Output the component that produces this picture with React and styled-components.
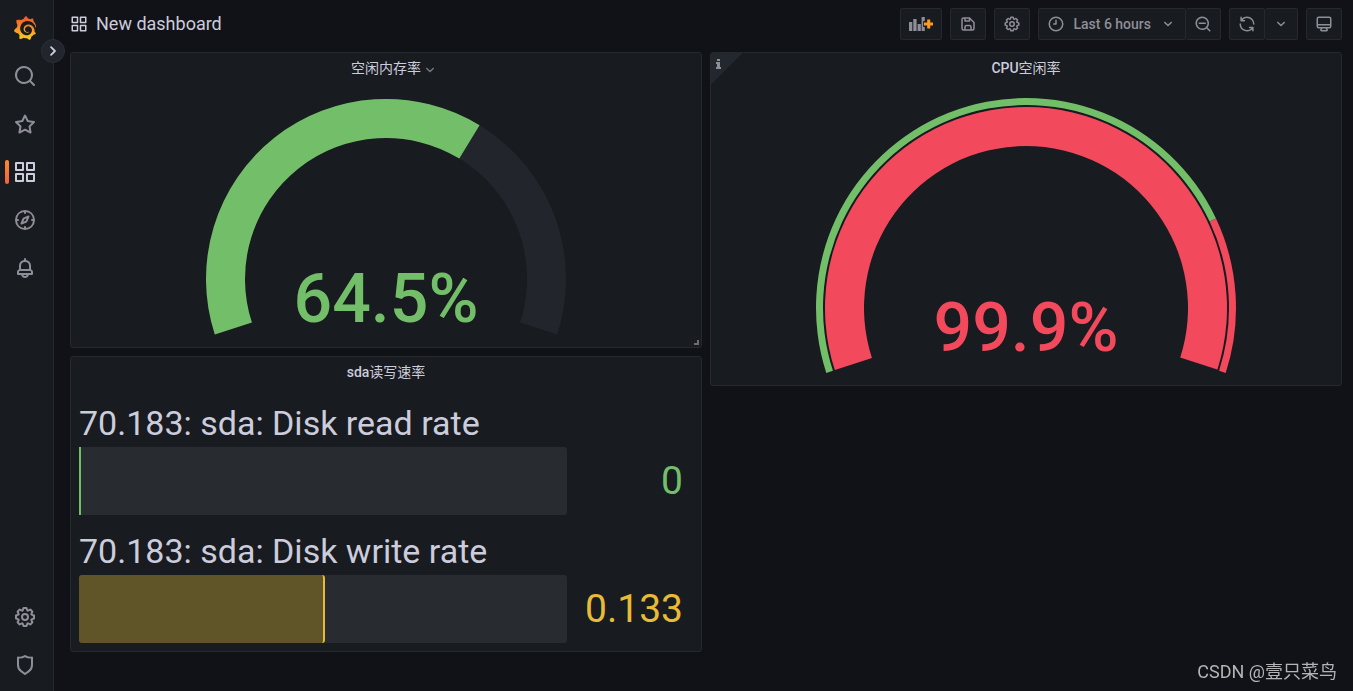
import React from 'react';
import styled, { createGlobalStyle } from 'styled-components';
import { SiGrafana } from 'react-icons/si';

const GlobalStyle = createGlobalStyle`
  * {
    box-sizing: border-box;
  }
  body {
    margin: 0;
    background: #111217;
    color: #ccccdc;
    font-family: Roboto, "Noto Sans CJK SC", sans-serif;
    font-size: 14px;
    line-height: 22px;
  }
  button {
    font: inherit;
    color: inherit;
    cursor: pointer;
  }
`;

const icons = {
  search: 'M21.71,20.29,18,16.61A9,9,0,1,0,16.61,18l3.68,3.68a1,1,0,0,0,1.42,0A1,1,0,0,0,21.71,20.29ZM11,18a7,7,0,1,1,7-7A7,7,0,0,1,11,18Z',
  searchMinus: 'M21.71,20.29,18,16.61A9,9,0,1,0,16.61,18l3.68,3.68a1,1,0,0,0,1.42,0A1,1,0,0,0,21.71,20.29ZM11,18a7,7,0,1,1,7-7A7,7,0,0,1,11,18Zm4-8H7a1,1,0,0,0,0,2h8a1,1,0,0,0,0-2Z',
  star: 'M22,9.67A1,1,0,0,0,21.14,9l-5.69-.83L12.9,3a1,1,0,0,0-1.8,0L8.55,8.16,2.86,9a1,1,0,0,0-.81.68,1,1,0,0,0,.25,1l4.13,4-1,5.68A1,1,0,0,0,6.9,21.44L12,18.77l5.1,2.67a.93.93,0,0,0,.46.12,1,1,0,0,0,.59-.19,1,1,0,0,0,.4-1l-1-5.68,4.13-4A1,1,0,0,0,22,9.67Zm-6.15,4a1,1,0,0,0-.29.88l.72,4.2-3.76-2a1.06,1.06,0,0,0-.94,0l-3.76,2,.72-4.2a1,1,0,0,0-.29-.88l-3-3,4.21-.61a1,1,0,0,0,.76-.55L12,5.7l1.88,3.82a1,1,0,0,0,.76.55l4.21.61Z',
  apps: 'M10,13H3a1,1,0,0,0-1,1v7a1,1,0,0,0,1,1h7a1,1,0,0,0,1-1V14A1,1,0,0,0,10,13ZM9,20H4V15H9ZM21,2H14a1,1,0,0,0-1,1v7a1,1,0,0,0,1,1h7a1,1,0,0,0,1-1V3A1,1,0,0,0,21,2ZM20,9H15V4h5Zm1,4H14a1,1,0,0,0-1,1v7a1,1,0,0,0,1,1h7a1,1,0,0,0,1-1V14A1,1,0,0,0,21,13Zm-1,7H15V15h5ZM10,2H3A1,1,0,0,0,2,3v7a1,1,0,0,0,1,1h7a1,1,0,0,0,1-1V3A1,1,0,0,0,10,2ZM9,9H4V4H9Z',
  compass: 'M12,2A10,10,0,1,0,22,12,10,10,0,0,0,12,2Zm1,17.93V19a1,1,0,0,0-2,0v.93A8,8,0,0,1,4.07,13H5a1,1,0,0,0,0-2H4.07A8,8,0,0,1,11,4.07V5a1,1,0,0,0,2,0V4.07A8,8,0,0,1,19.93,11H19a1,1,0,0,0,0,2h.93A8,8,0,0,1,13,19.93ZM15.14,7.55l-5,2.12a1,1,0,0,0-.52.52l-2.12,5a1,1,0,0,0,.21,1.1,1,1,0,0,0,.7.29.93.93,0,0,0,.4-.08l5-2.12a1,1,0,0,0,.52-.52l2.12-5a1,1,0,0,0-1.31-1.31Zm-2.49,5.1-2.28,1,1-2.28,2.28-1Z',
  bell: 'M18,13.18V10a6,6,0,0,0-5-5.91V3a1,1,0,0,0-2,0V4.09A6,6,0,0,0,6,10v3.18A3,3,0,0,0,4,16v2a1,1,0,0,0,1,1H8.14a4,4,0,0,0,7.72,0H19a1,1,0,0,0,1-1V16A3,3,0,0,0,18,13.18ZM8,10a4,4,0,0,1,8,0v3H8Zm4,10a2,2,0,0,1-1.72-1h3.44A2,2,0,0,1,12,20Zm6-3H6V16a1,1,0,0,1,1-1H17a1,1,0,0,1,1,1Z',
  cog: 'M21.32,9.55l-1.89-.63.89-1.78A1,1,0,0,0,20.13,6L18,3.87a1,1,0,0,0-1.15-.19l-1.78.89-.63-1.89A1,1,0,0,0,13.5,2h-3a1,1,0,0,0-.95.68L8.92,4.57,7.14,3.68A1,1,0,0,0,6,3.87L3.87,6a1,1,0,0,0-.19,1.15l.89,1.78-1.89.63A1,1,0,0,0,2,10.5v3a1,1,0,0,0,.68.95l1.89.63-.89,1.78A1,1,0,0,0,3.87,18L6,20.13a1,1,0,0,0,1.15.19l1.78-.89.63,1.89a1,1,0,0,0,.95.68h3a1,1,0,0,0,.95-.68l.63-1.89,1.78.89A1,1,0,0,0,18,20.13L20.13,18a1,1,0,0,0,.19-1.15l-.89-1.78,1.89-.63A1,1,0,0,0,22,13.5v-3A1,1,0,0,0,21.32,9.55ZM20,12.78l-1.2.4A2,2,0,0,0,17.64,16l.57,1.14-1.1,1.1L16,17.64a2,2,0,0,0-2.79,1.16l-.4,1.2H11.22l-.4-1.2A2,2,0,0,0,8,17.64l-1.14.57-1.1-1.1L6.36,16A2,2,0,0,0,5.2,13.18L4,12.78V11.22l1.2-.4A2,2,0,0,0,6.36,8L5.79,6.89l1.1-1.1L8,6.36A2,2,0,0,0,10.82,5.2l.4-1.2h1.56l.4,1.2A2,2,0,0,0,16,6.36l1.14-.57,1.1,1.1L17.64,8a2,2,0,0,0,1.16,2.79l1.2.4ZM12,8a4,4,0,1,0,4,4A4,4,0,0,0,12,8Zm0,6a2,2,0,1,1,2-2A2,2,0,0,1,12,14Z',
  shield: 'M19.63,3.65a1,1,0,0,0-.84-.2,8,8,0,0,1-6.22-1.27,1,1,0,0,0-1.14,0A8,8,0,0,1,5.21,3.45a1,1,0,0,0-.84.2A1,1,0,0,0,4,4.43v7.45a9,9,0,0,0,3.77,7.33l3.65,2.6a1,1,0,0,0,1.16,0l3.65-2.6A9,9,0,0,0,20,11.88V4.43A1,1,0,0,0,19.63,3.65ZM18,11.88a7,7,0,0,1-2.93,5.7L12,19.77,8.93,17.58A7,7,0,0,1,6,11.88V5.58a10,10,0,0,0,6-1.39,10,10,0,0,0,6,1.39Z',
  save: 'M20.71,9.29l-6-6a1,1,0,0,0-.32-.21A1.09,1.09,0,0,0,14,3H6A3,3,0,0,0,3,6V18a3,3,0,0,0,3,3H18a3,3,0,0,0,3-3V10A1,1,0,0,0,20.71,9.29ZM9,5h4V7H9Zm6,14H9V16a1,1,0,0,1,1-1h4a1,1,0,0,1,1,1Zm4-1a1,1,0,0,1-1,1H17V16a3,3,0,0,0-3-3H10a3,3,0,0,0-3,3v3H6a1,1,0,0,1-1-1V6A1,1,0,0,1,6,5H7V8A1,1,0,0,0,8,9h6a1,1,0,0,0,1-1V6.41l4,4Z',
  clock: 'M12,6a1,1,0,0,0-1,1v4H9a1,1,0,0,0,0,2h3a1,1,0,0,0,1-1V7A1,1,0,0,0,12,6Zm0-4A10,10,0,1,0,22,12,10,10,0,0,0,12,2Zm0,18a8,8,0,1,1,8-8A8,8,0,0,1,12,20Z',
  angleDown: 'M17,9.17a1,1,0,0,0-1.41,0L12,12.71,8.46,9.17a1,1,0,0,0-1.41,0,1,1,0,0,0,0,1.42l4.24,4.24a1,1,0,0,0,1.42,0L17,10.59A1,1,0,0,0,17,9.17Z',
  angleRight: 'M14.83,11.29,10.59,7.05a1,1,0,0,0-1.42,0,1,1,0,0,0,0,1.41L12.71,12,9.17,15.54a1,1,0,0,0,0,1.41,1,1,0,0,0,.71.29,1,1,0,0,0,.71-.29l4.24-4.24A1,1,0,0,0,14.83,11.29Z',
  sync: 'M19.91,15.51H15.38a1,1,0,0,0,0,2h2.4A8,8,0,0,1,4,12a1,1,0,1,0-2,0,10,10,0,0,0,16.88,7.23V21a1,1,0,0,0,2,0V16.5A1,1,0,0,0,19.91,15.51ZM12,2A10,10,0,0,0,5.12,4.77V3a1,1,0,0,0-2,0V7.5a1,1,0,0,0,1,1h4.5a1,1,0,0,0,0-2H6.22A8,8,0,0,1,20,12a1,1,0,0,0,2,0A10,10,0,0,0,12,2Z',
  monitor: 'M19,2H5A3,3,0,0,0,2,5V15a3,3,0,0,0,3,3H7.64l-.58,1a2,2,0,0,0,0,2,2,2,0,0,0,1.75,1h6.46A2,2,0,0,0,17,21a2,2,0,0,0,0-2l-.59-1H19a3,3,0,0,0,3-3V5A3,3,0,0,0,19,2ZM8.77,20,10,18H14l1.2,2ZM20,15a1,1,0,0,1-1,1H5a1,1,0,0,1-1-1V14H20Zm0-3H4V5A1,1,0,0,1,5,4H19a1,1,0,0,1,1,1Z',
};

const Svg = styled.svg`
  display: block;
  flex: none;
  fill: currentColor;
`;

const Icon = ({ name, size = 18 }) => (
  <Svg viewBox="0 0 24 24" width={size} height={size} aria-hidden="true">
    <path d={icons[name]} />
  </Svg>
);

const Page = styled.div`
  display: flex;
  min-height: 100vh;
`;

const Sidebar = styled.nav`
  position: relative;
  display: flex;
  flex-direction: column;
  flex: none;
  width: 54px;
  padding: 4px 3px 2px 0;
  background: #181b1f;
  border-right: 1px solid #25282c;
`;

const NavItem = styled.a`
  position: relative;
  display: flex;
  align-items: center;
  justify-content: center;
  height: 48px;
  color: ${props => (props.$active ? '#ccccdc' : '#8e8e99')};

  &::before {
    content: '';
    display: ${props => (props.$active ? 'block' : 'none')};
    position: absolute;
    left: 5px;
    top: 12px;
    width: 4px;
    height: 24px;
    border-radius: 2px;
    background: linear-gradient(#ff8833, #f55f3e);
  }
`;

const LogoDefs = styled.svg`
  position: absolute;
`;

const Logo = styled(SiGrafana)`
  width: 24px;
  height: 24px;

  path {
    fill: url(#logoFill);
  }
`;

const Spacer = styled.div`
  flex: 1;
`;

const ExpandButton = styled.button`
  position: absolute;
  top: 39px;
  right: -12px;
  display: flex;
  align-items: center;
  justify-content: center;
  width: 24px;
  height: 24px;
  padding: 0;
  border: 1px solid #2c2f35;
  border-radius: 50%;
  background: #22252b;
`;

const Main = styled.main`
  flex: 1;
  min-width: 0;
  padding: 0 11px 16px 16px;
`;

const Header = styled.header`
  display: flex;
  align-items: center;
  gap: 8px;
  padding: 8px 0 12px;
`;

const Title = styled.h1`
  display: flex;
  align-items: center;
  gap: 8px;
  flex: 1;
  margin: 0;
  font-size: 18px;
  font-weight: 400;
`;

const ButtonGroup = styled.div`
  display: flex;

  button + button {
    border-left: 0;
  }
`;

const ToolButton = styled.button`
  display: flex;
  align-items: center;
  gap: 8px;
  height: 32px;
  padding: 0 ${props => props.$pad || 8}px;
  border: 1px solid #25282c;
  border-radius: 2px;
  background: #181b1f;
  color: #8e8e99;
  font-weight: 500;
`;

const Grid = styled.div`
  display: grid;
  grid-template-columns: repeat(2, minmax(0, 1fr));
  grid-auto-rows: 30px;
  gap: 8px;
`;

const PanelBox = styled.section`
  position: relative;
  display: flex;
  flex-direction: column;
  grid-column: ${props => props.$col};
  grid-row: ${props => props.$row};
  background: #181b1f;
  border: 1px solid #25282c;
  border-radius: 3px;
`;

const PanelTitle = styled.h2`
  display: flex;
  justify-content: center;
  margin: 0;
  padding: 4px 0;
  font-size: 14px;
  font-weight: 400;
`;

const TitleButton = styled.button`
  position: relative;
  padding: 0;
  border: 0;
  background: none;
`;

const TitlePrefix = styled.span`
  font-weight: 500;
`;

const TitleCaret = styled.span`
  position: absolute;
  left: 100%;
  top: 4px;
  color: #77787f;
`;

const InfoCorner = styled.button`
  position: absolute;
  top: 0;
  left: 0;
  width: 32px;
  height: 32px;
  padding: 0;
  border: 0;
  background: linear-gradient(135deg, #22282d 50%, transparent 50%);
  color: #8e8e99;
`;

const ResizeHandle = styled.span`
  position: absolute;
  right: 2px;
  bottom: 2px;
  width: 5px;
  height: 5px;
  border-right: 2px solid #6b6d70;
  border-bottom: 2px solid #6b6d70;
`;

const GaugeSvg = styled.svg`
  display: block;
  flex: 1;
  width: 100%;
  min-height: 0;
`;

const GaugeValue = styled.text`
  font-size: 68px;
  font-weight: 500;
  text-anchor: middle;
`;

const BarList = styled.div`
  display: flex;
  flex-direction: column;
  justify-content: flex-end;
  gap: 16px;
  flex: 1;
  padding: 8px;
`;

const BarLabel = styled.div`
  padding-bottom: 4px;
  font-size: 34px;
  line-height: 40px;
  white-space: nowrap;
`;

const BarRow = styled.div`
  display: flex;
  align-items: center;
`;

const Track = styled.div`
  flex: 1;
  height: 68px;
  border-radius: 3px;
  background: #282b30;
`;

const Fill = styled.div`
  height: 100%;
  min-width: 2px;
  border-right: 2px solid ${props => props.$color};
  border-radius: ${props => (props.$empty ? 0 : 3)}px;
  background: ${props => props.$fill};
`;

const BarValue = styled.div`
  width: 126px;
  padding-right: 10px;
  color: ${props => props.$color};
  font-size: 39px;
  line-height: 44px;
  text-align: right;
`;

const Watermark = styled.div`
  position: fixed;
  right: 16px;
  bottom: 8px;
  color: #b4b4b6;
  font-size: 18px;
`;

const Panel = ({ prefix, title, col, row, menu, info, resizable, children }) => (
  <PanelBox $col={col} $row={row}>
    {info && (
      <InfoCorner aria-label="Panel description">
        <Svg viewBox="0 0 32 32" width="32" height="32" aria-hidden="true">
          <path d="M6 6h3v2H6zM5 9h4v5h1v2H5v-2h1v-3H5z" />
        </Svg>
      </InfoCorner>
    )}
    <PanelTitle>
      <TitleButton>
        {prefix && <TitlePrefix>{prefix}</TitlePrefix>}
        {title}
        {menu && (
          <TitleCaret>
            <Icon name="angleDown" />
          </TitleCaret>
        )}
      </TitleButton>
    </PanelTitle>
    {children}
    {resizable && <ResizeHandle />}
  </PanelBox>
);

// The dial sweeps 216 degrees, starting 18 degrees below the horizontal
const arcPath = (cx, cy, outer, inner, from, to) => {
  const point = (r, t) => {
    const a = ((198 - t * 216) * Math.PI) / 180;
    return `${cx + r * Math.cos(a)} ${cy - r * Math.sin(a)}`;
  };
  const large = (to - from) * 216 > 180 ? 1 : 0;
  return `M${point(outer, from)} A${outer} ${outer} 0 ${large} 1 ${point(outer, to)}
    L${point(inner, to)} A${inner} ${inner} 0 ${large} 0 ${point(inner, from)} Z`;
};

const Gauge = ({ value, color, height, cy, radius, thresholds = [] }) => {
  const cx = 315;
  const inner = radius - 39;
  return (
    <GaugeSvg viewBox={`0 0 630 ${height}`}>
      <path d={arcPath(cx, cy, radius, inner, 0, 1)} fill="#22252b" />
      <path d={arcPath(cx, cy, radius, inner, 0, value / 100)} fill={color} />
      {thresholds.map(t => (
        <path key={t.from} d={arcPath(cx, cy, radius + 9, radius + 2, t.from, t.to)} fill={t.color} />
      ))}
      <GaugeValue x={cx} y={cy + 43} fill={color}>{value}%</GaugeValue>
    </GaugeSvg>
  );
};

const bars = [
  { label: '70.183: sda: Disk read rate', value: '0', percent: 0, color: '#73bf69', fill: '#3a5a3a' },
  { label: '70.183: sda: Disk write rate', value: '0.133', percent: 50.5, color: '#e5bb38', fill: '#5f5529' },
];

const App = () => (
  <>
    <GlobalStyle />
    <Page>
      <Sidebar>
        <LogoDefs width="0" height="0" aria-hidden="true">
          <linearGradient id="logoFill" x1="0" y1="1" x2="0" y2="0">
            <stop offset="0" stopColor="#fcd01f" />
            <stop offset="1" stopColor="#f1502a" />
          </linearGradient>
        </LogoDefs>
        <NavItem href="#home" aria-label="Home"><Logo /></NavItem>
        <NavItem href="#search" aria-label="Search"><Icon name="search" size={24} /></NavItem>
        <NavItem href="#starred" aria-label="Starred"><Icon name="star" size={24} /></NavItem>
        <NavItem href="#dashboards" aria-label="Dashboards" $active><Icon name="apps" size={24} /></NavItem>
        <NavItem href="#explore" aria-label="Explore"><Icon name="compass" size={24} /></NavItem>
        <NavItem href="#alerting" aria-label="Alerting"><Icon name="bell" size={24} /></NavItem>
        <Spacer />
        <NavItem href="#configuration" aria-label="Configuration"><Icon name="cog" size={24} /></NavItem>
        <NavItem href="#admin" aria-label="Server admin"><Icon name="shield" size={24} /></NavItem>
        <ExpandButton aria-label="Expand menu"><Icon name="angleRight" size={22} /></ExpandButton>
      </Sidebar>

      <Main>
        <Header>
          <Title>
            <Icon name="apps" />
            New dashboard
          </Title>
          <ToolButton aria-label="Add panel">
            <Svg viewBox="0 0 24 16" width="24" height="16" aria-hidden="true">
              <path d="M0 6h3.3v9H0zM4.3 3h3.3v12H4.3zM8.6 8h3.2v7H8.6zM12.6 1h3.2v4h-1.6v6h1.6v4h-3.2z" />
              <path d="M18.2 3.5h3v3H24v3h-2.8v3h-3v-3H15v-3h3.2z" fill="#fb9b22" />
            </Svg>
          </ToolButton>
          <ToolButton aria-label="Save dashboard"><Icon name="save" /></ToolButton>
          <ToolButton aria-label="Dashboard settings"><Icon name="cog" /></ToolButton>
          <ButtonGroup>
            <ToolButton>
              <Icon name="clock" />
              Last 6 hours
              <Icon name="angleDown" />
            </ToolButton>
            <ToolButton aria-label="Zoom out"><Icon name="searchMinus" /></ToolButton>
          </ButtonGroup>
          <ButtonGroup>
            <ToolButton aria-label="Refresh"><Icon name="sync" /></ToolButton>
            <ToolButton aria-label="Refresh interval" $pad={7}><Icon name="angleDown" /></ToolButton>
          </ButtonGroup>
          <ToolButton aria-label="Cycle view mode"><Icon name="monitor" /></ToolButton>
        </Header>

        <Grid>
          <Panel title="空闲内存率" col={1} row="1 / span 8" menu resizable>
            <Gauge value={64.5} color="#73bf69" height={264} cy={196} radius={180} />
          </Panel>
          <Panel prefix="CPU" title="空闲率" col={2} row="1 / span 9" info>
            <Gauge
              value={99.9}
              color="#f2495c"
              height={302}
              cy={225}
              radius={201}
              thresholds={[
                { from: 0, to: 0.8, color: '#73bf69' },
                { from: 0.8, to: 1, color: '#f2495c' },
              ]}
            />
          </Panel>
          <Panel prefix="sda" title="读写速率" col={1} row="9 / span 8">
            <BarList>
              {bars.map(bar => (
                <div key={bar.label}>
                  <BarLabel>{bar.label}</BarLabel>
                  <BarRow>
                    <Track>
                      <Fill
                        $color={bar.color}
                        $fill={bar.fill}
                        $empty={bar.percent === 0}
                        style={{ width: `${bar.percent}%` }}
                      />
                    </Track>
                    <BarValue $color={bar.color}>{bar.value}</BarValue>
                  </BarRow>
                </div>
              ))}
            </BarList>
          </Panel>
        </Grid>
      </Main>
    </Page>
    <Watermark>CSDN @壹只菜鸟</Watermark>
  </>
);

export default App;
